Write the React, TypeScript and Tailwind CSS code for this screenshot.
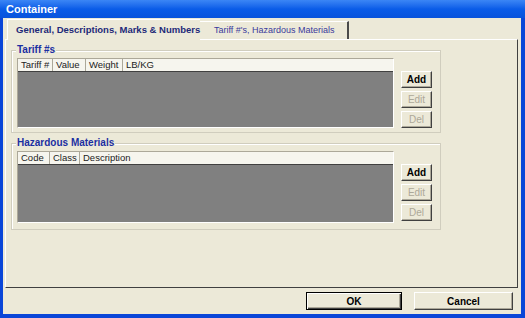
const tariffCols = [
  { label: "Tariff #", w: "w-[35px]" },
  { label: "Value", w: "w-[33px]" },
  { label: "Weight", w: "w-[37px]" },
];

const hazmatCols = [
  { label: "Code", w: "w-[32px]" },
  { label: "Class", w: "w-[30px]" },
];

function XpButton({ label, disabled, bold }: { label: string; disabled?: boolean; bold?: boolean }) {
  return (
    <button
      className={`flex h-[17px] w-[31px] items-center justify-center border border-t-white border-l-white border-r-[#404040] border-b-[#404040] bg-[#ece9d8] shadow-[inset_-1px_-1px_#aca899] text-[10px] leading-none ${
        disabled ? "text-[#aca899]" : "text-black"
      } ${bold ? "font-bold" : ""}`}
    >
      {label}
    </button>
  );
}

function Grid({ cols, last, h }: { cols: { label: string; w: string }[]; last: string; h: string }) {
  return (
    <div className={`flex w-[377px] ${h} flex-col border border-t-[#aca899] border-l-[#aca899] border-r-white border-b-white`}>
      <div className="flex h-[13px] shrink-0 border-b border-[#404040] bg-[#f6f5ee] text-[9.5px] leading-none text-[#222]">
        {cols.map((c) => (
          <div key={c.label} className={`${c.w} flex items-center border-r border-[#aca899] pl-[3px]`}>
            {c.label}
          </div>
        ))}
        <div className="flex flex-1 items-center pl-[3px]">{last}</div>
      </div>
      <div className="flex-1 bg-[#808080]" />
    </div>
  );
}

function GroupBox({
  title,
  cols,
  last,
  boxH,
  gridH,
}: {
  title: string;
  cols: { label: string; w: string }[];
  last: string;
  boxH: string;
  gridH: string;
}) {
  return (
    <div className={`relative w-[430px] ${boxH} border border-[#d0cdbe] shadow-[inset_1px_1px_white]`}>
      <span className="absolute -top-[6px] left-[4px] bg-[#ece9d8] px-[1px] text-[10px] font-bold leading-none text-[#1b2fa2]">
        {title}
      </span>
      <div className="flex gap-[7px] pl-[5px] pt-[7px]">
        <Grid cols={cols} last={last} h={gridH} />
        <div className="mt-[13px] flex flex-col gap-[3px]">
          <XpButton label="Add" bold />
          <XpButton label="Edit" disabled />
          <XpButton label="Del" disabled />
        </div>
      </div>
    </div>
  );
}

export default function App() {
  return (
    <div className="flex h-[318px] w-[525px] flex-col bg-[#0a46d8] font-['Liberation_Sans',Arial,sans-serif]">
      <div className="flex h-[18px] shrink-0 items-center bg-gradient-to-b from-[#3b86f5] via-[#0a5ce8] to-[#0853dc] pl-[6px] text-[11px] font-bold text-white">
        Container
      </div>
      <div className="mb-[4px] ml-[3px] mr-[4px] flex flex-1 flex-col bg-[#ece9d8]">
        <div className="flex h-[21px] items-end pl-[4px]">
          <div className="relative z-10 -mb-px flex h-[21px] w-[193px] items-center whitespace-nowrap border-t border-l border-white bg-[#ece9d8] pl-[8px] text-[9.5px] font-bold text-[#1e2a78]">
            General, Descriptions, Marks &amp; Numbers
          </div>
          <div className="flex h-[18px] w-[149px] items-center whitespace-nowrap border-t border-r-2 border-t-white border-r-[#4a4a4a] pl-[14px] text-[9px] text-[#3a3a9c]">
            Tariff #'s, Hazardous Materials
          </div>
        </div>
        <div className="ml-[2px] flex h-[249px] w-[513px] flex-col gap-[10px] border border-t-white border-l-white border-r-[#404040] border-b-[#404040] pl-[5px] pt-[10px]">
          <GroupBox
            title="Tariff #s"
            cols={tariffCols}
            last="LB/KG"
            boxH="h-[83px]"
            gridH="h-[70px]"
          />
          <GroupBox
            title="Hazardous Materials"
            cols={hazmatCols}
            last="Description"
            boxH="h-[87px]"
            gridH="h-[72px]"
          />
        </div>
        <div className="mr-[8px] mt-[4px] flex justify-end gap-[12px]">
          <button className="flex h-[18px] w-[96px] items-center justify-center border border-black bg-[#ece9d8] text-[10px] font-bold text-black shadow-[inset_1px_1px_white,inset_-1px_-1px_#404040,inset_-2px_-2px_#aca899]">
            OK
          </button>
          <button className="flex h-[18px] w-[99px] items-center justify-center border border-t-white border-l-white border-r-[#404040] border-b-[#404040] bg-[#ece9d8] text-[10px] font-bold text-black shadow-[inset_-1px_-1px_#aca899]">
            Cancel
          </button>
        </div>
      </div>
    </div>
  );
}
